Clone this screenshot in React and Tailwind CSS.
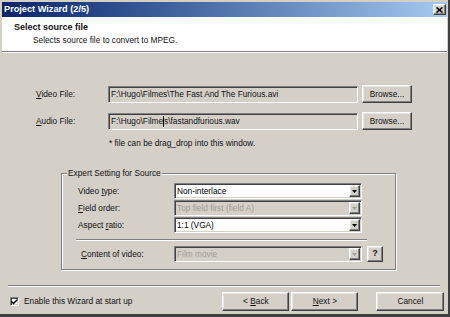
import React from "react";

const raised =
  "border border-t-white border-l-white border-r-[#404040] border-b-[#404040] shadow-[inset_-1px_-1px_0_#808080,inset_1px_1px_0_#e8e6e1] bg-[#d4d0c8]";
const sunken =
  "border border-t-[#808080] border-l-[#808080] border-r-white border-b-white shadow-[inset_1px_1px_0_#404040,inset_-1px_-1px_0_#d4d0c8]";

const Arrow = ({ disabled }) => (
  <div className={`${raised} w-[11px] h-full flex items-center justify-center shrink-0`}>
    <svg width="5" height="3" viewBox="0 0 5 3">
      <path d="M0 0h5L2.5 3z" fill={disabled ? "#a0a0a0" : "#000"} />
    </svg>
  </div>
);

const Select = ({ value, disabled }) => (
  <div
    className={`${sunken} w-[188px] h-[16px] flex items-stretch ${
      disabled ? "bg-[#d4d0c8] text-[#a09c94]" : "bg-white text-black"
    }`}
  >
    <div className="flex-1 flex items-center pl-[2px] leading-none">{value}</div>
    <div className="p-[1px]">
      <Arrow disabled={disabled} />
    </div>
  </div>
);

const FieldRow = ({ label, children }) => (
  <div className="flex items-center h-[16px]">
    <div className="w-[96px] shrink-0">{label}</div>
    {children}
  </div>
);

export default function App() {
  return (
    <div className="w-[450px] h-[317px] bg-[#d4d0c8] pl-[2px] pt-[2px] border-r-2 border-b-[3px] border-r-[#404040] border-b-[#404040] flex flex-col text-[8.3px] text-[#111] font-['Liberation_Sans',Arial,sans-serif] overflow-hidden">
      {/* title bar */}
      <div className="h-[15px] mr-[1px] bg-linear-to-r from-[#0a246a] to-[#a6caf0] flex items-center justify-between pl-[2px] pr-[1px]">
        <span className="text-white font-bold text-[9.2px] leading-none">Project Wizard (2/5)</span>
        <div className={`${raised} w-[13px] h-[11px] flex items-center justify-center`}>
          <svg width="7" height="6" viewBox="0 0 7 6">
            <path d="M0.5 0.5L6.5 5.5M6.5 0.5L0.5 5.5" stroke="#000" strokeWidth="1.6" />
          </svg>
        </div>
      </div>

      {/* header */}
      <div className="h-[35px] mr-[1px] bg-white border-b border-b-[#808080] pl-[12px] pt-[5px] shrink-0">
        <div className="font-bold text-[9px] leading-[11px]">Select source file</div>
        <div className="pl-[19px] mt-[2px] leading-[10px]">Selects source file to convert to MPEG.</div>
      </div>
      <div className="h-[1px] bg-white mr-[1px]" />

      {/* body */}
      <div className="flex-1 flex flex-col pt-[32px]">
        <div className="flex items-center h-[18px] pl-[34px]">
          <div className="w-[72px]">
            <u>V</u>ideo File:
          </div>
          <div className={`${sunken} w-[250px] h-[17px] flex items-center pl-[2px] bg-[#d4d0c8]`}>
            {"F:\\Hugo\\Filmes\\The Fast And The Furious.avi"}
          </div>
          <button className={`${raised} ml-[4px] w-[50px] h-[18px] flex items-center justify-center`}>Browse...</button>
        </div>
        <div className="flex items-center h-[18px] pl-[34px] mt-[9px]">
          <div className="w-[72px]">
            <u>A</u>udio File:
          </div>
          <div className={`${sunken} w-[250px] h-[17px] flex items-center pl-[2px] bg-[#d4d0c8]`}>
            {"F:\\Hugo\\Filme"}
            <span className="inline-block w-[1px] h-[11px] bg-black" />
            {"s\\fastandfurious.wav"}
          </div>
          <button className={`${raised} ml-[4px] w-[50px] h-[18px] flex items-center justify-center`}>Browse...</button>
        </div>
        <div className="ml-[107px] mt-[8px] leading-[10px]">* file can be drag_drop into this window.</div>

        {/* group box */}
        <div className="ml-[59px] mt-[25px] w-[335px] h-[97px] border border-[#808080] shadow-[inset_1px_1px_0_#fff,1px_1px_0_#fff] flex flex-col">
          <div className="-mt-[6px] ml-[5px] px-[1px] bg-[#d4d0c8] leading-[10px] w-fit">Expert Setting for Source</div>
          <div className="pl-[16px] mt-[5px] flex flex-col gap-[1px]">
            <FieldRow
              label={
                <>
                  Video <u>t</u>ype:
                </>
              }
            >
              <Select value="Non-interlace" />
            </FieldRow>
            <FieldRow
              label={
                <>
                  <u>F</u>ield order:
                </>
              }
            >
              <Select value="Top field first (field A)" disabled />
            </FieldRow>
            <FieldRow
              label={
                <>
                  Aspect <u>r</u>atio:
                </>
              }
            >
              <Select value="1:1 (VGA)" />
            </FieldRow>
          </div>
          <div className="ml-[14px] mt-[6px] w-[291px] h-[2px] border-t border-t-[#808080] border-b border-b-white" />
          <div className="pl-[16px] mt-[5px] flex items-center">
            <FieldRow
              label={
                <span className="pl-[3px]">
                  <u>C</u>ontent of video:
                </span>
              }
            >
              <Select value="Film movie" disabled />
            </FieldRow>
            <button className={`${raised} ml-[5px] w-[16px] h-[16px] flex items-center justify-center font-bold text-[9px]`}>?</button>
          </div>
        </div>

        <div className="ml-[6px] mt-[15px] w-[432px] h-[2px] border-t border-t-[#808080] border-b border-b-white" />

        <div className="flex items-center mt-[5px] h-[19px] pl-[8px]">
          <div className={`${sunken} w-[9px] h-[9px] bg-white flex items-center justify-center`}>
            <svg width="7" height="6" viewBox="0 0 7 6">
              <path d="M0.5 2.5L2.5 4.5L6.5 0.5" stroke="#000" strokeWidth="1.5" fill="none" />
            </svg>
          </div>
          <span className="ml-[5px]">Enable this Wizard at start up</span>
          <button className={`${raised} ml-[90px] w-[67px] h-[19px] flex items-center justify-center`}>
            <span className="whitespace-pre">
              {"< "}
              <u>B</u>ack
            </span>
          </button>
          <button className={`${raised} ml-[2px] w-[67px] h-[19px] flex items-center justify-center`}>
            <span className="whitespace-pre">
              <u>N</u>ext{" >"}
            </span>
          </button>
          <button className={`${raised} ml-[18px] w-[68px] h-[19px] flex items-center justify-center`}>Cancel</button>
        </div>
      </div>
    </div>
  );
}
